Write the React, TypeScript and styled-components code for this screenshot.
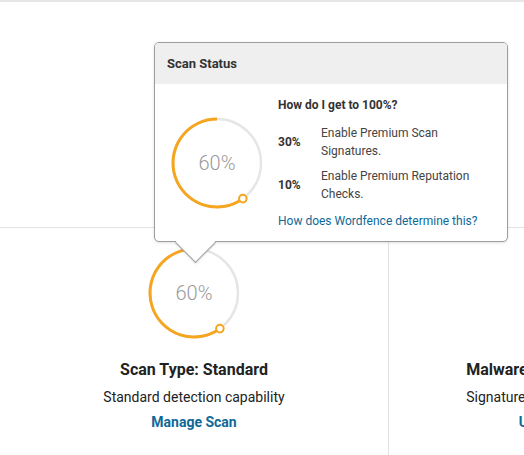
import React from "react";
import styled, { createGlobalStyle } from "styled-components";

const GlobalStyle = createGlobalStyle`
  body {
    margin: 0;
    background: #fff;
    font-family: Roboto, "Liberation Sans", sans-serif;
    overflow: hidden;
  }
`;

const ORANGE = "#f6a51e";
const TRACK = "#e6e6e6";
const LINK = "#0f6896";

const Page = styled.div`
  position: relative;
  width: 524px;
  height: 455px;
  border-top: 2px solid #e6e6e6;
  box-sizing: border-box;
  overflow: hidden;
`;

const Spacer = styled.div`
  height: 225px;
`;

const Row = styled.div`
  display: flex;
  width: 780px;
  border-top: 1px solid #e2e2e2;
`;

const Column = styled.div<{ $divider?: boolean }>`
  width: 389px;
  flex-shrink: 0;
  display: flex;
  flex-direction: column;
  align-items: center;
  padding-top: 17px;
  height: 240px;
  box-sizing: border-box;
  border-right: ${(p) => (p.$divider ? "1px solid #e2e2e2" : "none")};
`;

const CardTitle = styled.div`
  margin-top: 19px;
  font-size: 16px;
  line-height: 20px;
  font-weight: 700;
  color: #222;
  white-space: nowrap;
`;

const CardText = styled.div`
  margin-top: 7px;
  font-size: 14px;
  line-height: 20px;
  color: #222;
  white-space: nowrap;
`;

const CardLink = styled.a`
  margin-top: 5px;
  font-size: 14px;
  line-height: 20px;
  font-weight: 700;
  color: ${LINK};
  text-decoration: none;
  white-space: nowrap;
`;

const Popover = styled.div`
  position: absolute;
  left: 154px;
  top: 40px;
  width: 352px;
  background: #fff;
  border: 1px solid #9d9d9d;
  border-radius: 5px;
  box-shadow: 0 1px 3px rgba(0, 0, 0, 0.12);
  z-index: 5;
`;

const PopoverHeader = styled.div`
  height: 41px;
  display: flex;
  align-items: center;
  padding: 0 12px;
  background: #efefef;
  border-radius: 4px 4px 0 0;
  font-size: 13px;
  font-weight: 700;
  color: #333;
`;

const PopoverBody = styled.div`
  display: flex;
  align-items: center;
  gap: 13px;
  padding: 13px 12px 12px 14px;
`;

const Arrow = styled.div`
  position: absolute;
  left: 26px;
  bottom: -16px;
  width: 28px;
  height: 28px;
  background: #fff;
  border-right: 1px solid #9d9d9d;
  border-bottom: 1px solid #9d9d9d;
  transform: rotate(45deg);
  box-shadow: 1px 1px 2px rgba(0, 0, 0, 0.1);
`;

const Details = styled.div`
  display: flex;
  flex-direction: column;
  color: #444;
  font-size: 12px;
`;

const Question = styled.div`
  font-weight: 700;
  line-height: 16px;
  color: #333;
  margin-bottom: 11px;
`;

const Item = styled.div`
  display: flex;
  align-items: center;
  margin-bottom: 7px;
`;

const Pct = styled.div`
  width: 43px;
  flex-shrink: 0;
  font-weight: 700;
  color: #333;
`;

const ItemText = styled.div`
  width: 160px;
  line-height: 18px;
`;

const HelpLink = styled.a`
  margin-top: 3px;
  line-height: 16px;
  color: ${LINK};
  text-decoration: none;
`;

const RingLabel = styled.text`
  font-family: Roboto, "Liberation Sans", sans-serif;
  font-size: 20px;
  font-weight: 300;
  fill: #999;
`;

function Ring({ percent }: { percent: number }) {
  const c = 48;
  const r = 44;
  const angle = (1 - percent / 100) * 2 * Math.PI;
  const ex = c + r * Math.sin(angle);
  const ey = c - r * Math.cos(angle);
  const large = percent > 50 ? 1 : 0;
  return (
    <svg width="96" height="96" viewBox="0 0 96 96">
      <circle cx={c} cy={c} r={r} fill="none" stroke={TRACK} strokeWidth="2.5" />
      <path
        d={`M ${c} ${c - r} A ${r} ${r} 0 ${large} 0 ${ex} ${ey}`}
        fill="none"
        stroke={ORANGE}
        strokeWidth="3"
      />
      <circle cx={ex} cy={ey} r="3.8" fill="#fff" stroke={ORANGE} strokeWidth="2" />
      <RingLabel x={c} y={c + 7} textAnchor="middle">
        {percent}%
      </RingLabel>
    </svg>
  );
}

export default function App() {
  return (
    <>
      <GlobalStyle />
      <Page>
        <Spacer />
        <Row>
          <Column $divider>
            <Ring percent={60} />
            <CardTitle>Scan Type: Standard</CardTitle>
            <CardText>Standard detection capability</CardText>
            <CardLink href="#">Manage Scan</CardLink>
          </Column>
          <Column>
            <Ring percent={70} />
            <CardTitle>Malware Signatures: Community</CardTitle>
            <CardText>Signature updates delayed by 30 days</CardText>
            <CardLink href="#">Upgrade to Premium</CardLink>
          </Column>
        </Row>
        <Popover>
          <PopoverHeader>Scan Status</PopoverHeader>
          <PopoverBody>
            <Ring percent={60} />
            <Details>
              <Question>How do I get to 100%?</Question>
              <Item>
                <Pct>30%</Pct>
                <ItemText>Enable Premium Scan Signatures.</ItemText>
              </Item>
              <Item>
                <Pct>10%</Pct>
                <ItemText>Enable Premium Reputation Checks.</ItemText>
              </Item>
              <HelpLink href="#">How does Wordfence determine this?</HelpLink>
            </Details>
          </PopoverBody>
          <Arrow />
        </Popover>
      </Page>
    </>
  );
}
